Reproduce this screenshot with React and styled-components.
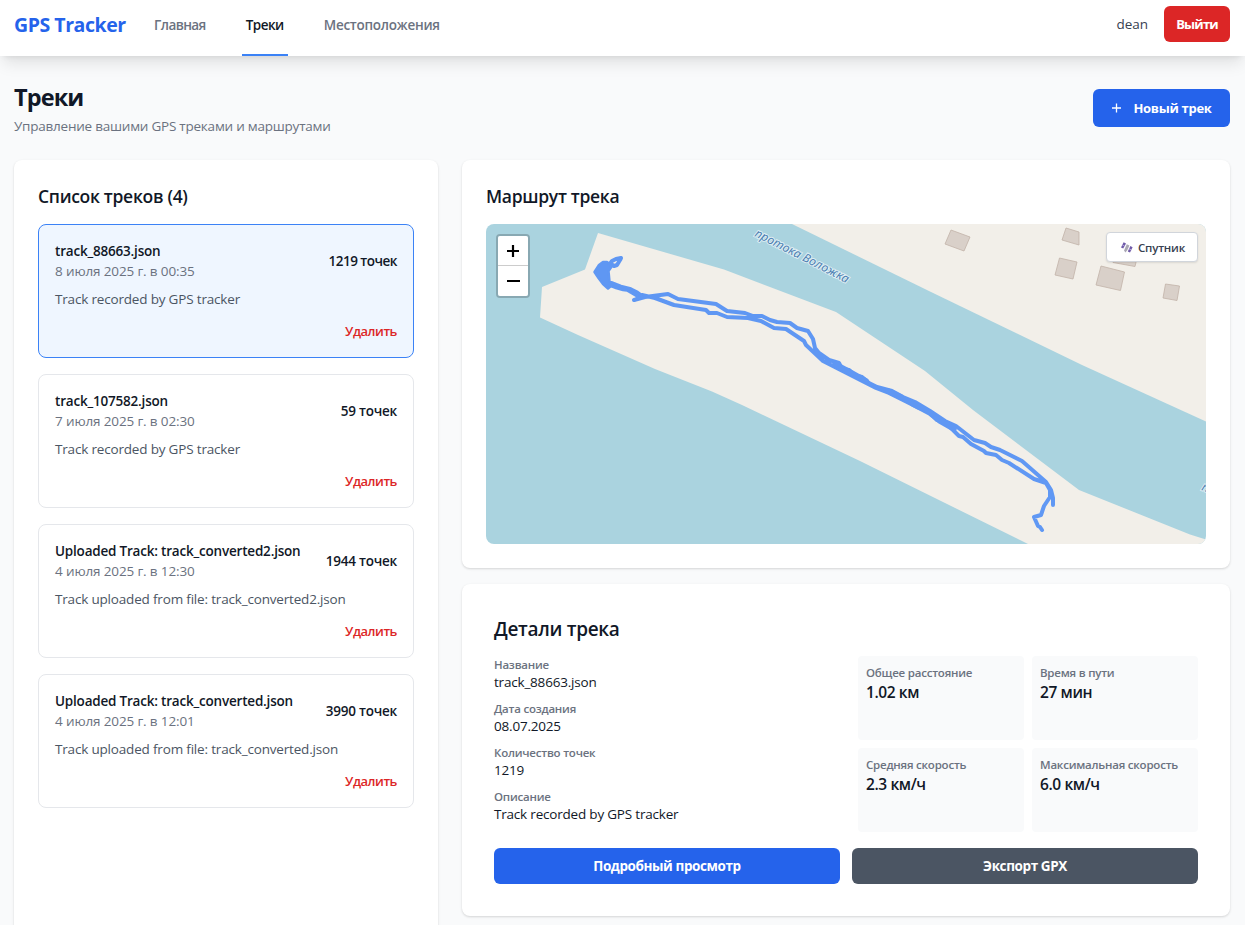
import React from "react";
import styled, { createGlobalStyle } from "styled-components";

const Global = createGlobalStyle`
  *, *::before, *::after { box-sizing: border-box; }
  html, body { margin: 0; height: 925px; overflow: hidden; }
  body {
    background: #f9fafb;
    color: #111827;
    font-family: "Open Sans", "Noto Sans", sans-serif;
    font-size: 13.5px;
    line-height: 20px;
  }
  h1, h2, h3, p, dl, dt, dd, ul { margin: 0; padding: 0; }
  button { font-family: inherit; border: 0; cursor: pointer; }
`;

const Page = styled.div`
  height: 925px;
  overflow: hidden;
`;

const TopBar = styled.header`
  display: flex;
  align-items: center;
  justify-content: space-between;
  height: 56px;
  padding: 0 15px 0 14px;
  background: #fff;
  box-shadow: 0 10px 15px -3px rgba(0, 0, 0, 0.1), 0 4px 6px -4px rgba(0, 0, 0, 0.1);
`;

const Brand = styled.div`
  width: 112px;
  margin-right: 24px;
  padding-bottom: 6px;
  color: #2563eb;
  font-size: 19.5px;
  font-weight: 700;
  line-height: 28px;
  letter-spacing: -0.45px;
  white-space: nowrap;
`;

const Nav = styled.nav`
  display: flex;
  align-items: center;
  height: 56px;
`;

const NavLink = styled.a`
  display: flex;
  align-items: center;
  height: 56px;
  margin-right: ${(p) => p.$gap || 0}px;
  padding: 0 4px 4px;
  border-bottom: 2px solid ${(p) => (p.$active ? "#3b82f6" : "transparent")};
  color: ${(p) => (p.$active ? "#111827" : "#6b7280")};
  font-weight: 600;
  letter-spacing: ${(p) => p.$track || 0}px;
  white-space: nowrap;
`;

const Account = styled.div`
  display: flex;
  align-items: center;
  gap: 16px;
  padding-bottom: 8px;
  color: #374151;
`;

const Button = styled.button`
  display: flex;
  align-items: center;
  justify-content: center;
  gap: 11px;
  height: ${(p) => p.$h || 36}px;
  width: ${(p) => (p.$w ? `${p.$w}px` : "auto")};
  flex: ${(p) => (p.$w ? "none" : "1")};
  padding: 0 0 1px;
  border-radius: 6px;
  background: ${(p) => p.$color};
  color: #fff;
  font-size: ${(p) => (p.$w ? 13 : 13.5)}px;
  font-weight: 700;
  letter-spacing: ${(p) => p.$track || -0.4}px;
  white-space: nowrap;
`;

const Heading = styled.div`
  display: flex;
  justify-content: space-between;
  align-items: center;
  height: 104px;
  padding: 0 15px 0 14px;
`;

const Title = styled.h1`
  font-size: 23.5px;
  line-height: 32px;
  font-weight: 700;
  letter-spacing: -0.9px;
`;

const Subtitle = styled.p`
  margin: 3px 0 -1px;
  color: #6b7280;
  letter-spacing: -0.23px;
`;

const Columns = styled.main`
  display: grid;
  grid-template-columns: 424px 768px;
  gap: 24px;
  padding-left: 14px;
`;

const Card = styled.section`
  border-radius: 8px;
  background: #fff;
  box-shadow: 0 1px 3px rgba(0, 0, 0, 0.1), 0 1px 2px rgba(0, 0, 0, 0.06);
  height: ${(p) => p.$h}px;
  padding: ${(p) => p.$pad || 24}px;
`;

const CardTitle = styled.h2`
  height: 40px;
  font-size: ${(p) => p.$size || 17.5}px;
  line-height: ${(p) => (p.$size ? 26 : 25)}px;
  font-weight: 600;
  letter-spacing: -0.3px;
`;

const TrackList = styled.div`
  display: flex;
  flex-direction: column;
  gap: 16px;
`;

const TrackItem = styled.article`
  display: flex;
  flex-direction: column;
  height: 134px;
  padding: 16px;
  border: 1px solid ${(p) => (p.$selected ? "#3b82f6" : "#e5e7eb")};
  border-radius: 8px;
  background: ${(p) => (p.$selected ? "#eff6ff" : "#fff")};
`;

const TrackHead = styled.div`
  display: flex;
  align-items: center;
  justify-content: space-between;
  height: 40px;
  white-space: nowrap;
`;

const TrackName = styled.h3`
  font-size: 13.5px;
  line-height: 20px;
  font-weight: 600;
  letter-spacing: -0.2px;
`;

const TrackDate = styled.p`
  color: #6b7280;
  letter-spacing: -0.14px;
`;

const Points = styled.span`
  font-weight: 600;
  letter-spacing: ${(p) => (p.$tight ? -0.5 : -0.22)}px;
`;

const TrackNote = styled.p`
  margin-top: 8px;
  color: #4b5563;
  letter-spacing: -0.18px;
  white-space: nowrap;
`;

const DeleteLink = styled.button`
  align-self: flex-end;
  margin-top: 12px;
  padding: 0;
  background: none;
  color: #dc2626;
  font-size: 13px;
  line-height: 20px;
  font-weight: 600;
  letter-spacing: -0.45px;
`;

const RightColumn = styled.div`
  display: flex;
  flex-direction: column;
  gap: 16px;
`;

const MapFrame = styled.div`
  position: relative;
  width: 720px;
  height: 320px;
  border-radius: 8px;
  overflow: hidden;
`;

const ZoomControl = styled.div`
  position: absolute;
  top: 10px;
  left: 10px;
  width: 34px;
  border: 2px solid rgba(0, 0, 0, 0.2);
  border-radius: 4px;
  background-clip: padding-box;
`;

const ZoomButton = styled.button`
  display: flex;
  align-items: center;
  justify-content: center;
  width: 30px;
  height: 30px;
  padding: 0;
  background: #fff;
  border-bottom: ${(p) => (p.$first ? "1px solid #ccc" : "0")};
  border-radius: ${(p) => (p.$first ? "2px 2px 0 0" : "0 0 2px 2px")};
`;

const LayerButton = styled.button`
  position: absolute;
  top: 8px;
  right: 8px;
  display: flex;
  align-items: center;
  width: 92px;
  height: 30px;
  padding: 0 0 0 13px;
  gap: 5px;
  border: 1px solid #d1d5db;
  border-radius: 4px;
  background: #fff;
  box-shadow: 0 1px 2px rgba(0, 0, 0, 0.1);
  color: #374151;
  font-size: 11.5px;
  font-weight: 600;
  letter-spacing: -0.2px;
`;

const DetailGrid = styled.div`
  display: grid;
  grid-template-columns: 356px 340px;
  gap: 8px;
  height: 176px;
`;

const Facts = styled.dl`
  display: flex;
  flex-direction: column;
  gap: 8px;
`;

const Label = styled.dt`
  padding-top: ${(p) => p.$drop || 0}px;
  margin-bottom: -${(p) => p.$drop || 0}px;
  color: #6b7280;
  font-size: 11.5px;
  line-height: 16px;
  font-weight: 600;
  letter-spacing: -0.22px;
  white-space: nowrap;
`;

const Value = styled.dd`
  line-height: ${(p) => (p.$big ? 23 : 20)}px;
  font-size: ${(p) => (p.$big ? 15.5 : 13.5)}px;
  font-weight: ${(p) => (p.$big ? 600 : 400)};
  letter-spacing: ${(p) => (p.$big ? -0.4 : -0.2)}px;
`;

const Stats = styled.div`
  display: grid;
  grid-template-columns: 166px 166px;
  grid-template-rows: 84px 84px;
  gap: 8px;
`;

const Stat = styled.dl`
  padding: 9px 8px;
  border-radius: 4px;
  background: #f9fafb;
`;

const Actions = styled.div`
  display: flex;
  gap: 12px;
  margin-top: 16px;
`;

const tracks = [
  { name: "track_88663.json", date: "8 июля 2025 г. в 00:35", points: 1219, note: "Track recorded by GPS tracker" },
  { name: "track_107582.json", date: "7 июля 2025 г. в 02:30", points: 59, note: "Track recorded by GPS tracker" },
  { name: "Uploaded Track: track_converted2.json", date: "4 июля 2025 г. в 12:30", points: 1944, note: "Track uploaded from file: track_converted2.json" },
  { name: "Uploaded Track: track_converted.json", date: "4 июля 2025 г. в 12:01", points: 3990, note: "Track uploaded from file: track_converted.json" },
];

const facts = [
  ["Название", "track_88663.json"],
  ["Дата создания", "08.07.2025"],
  ["Количество точек", "1219"],
  ["Описание", "Track recorded by GPS tracker"],
];

const stats = [
  ["Общее расстояние", "1.02 км"],
  ["Время в пути", "27 мин"],
  ["Средняя скорость", "2.3 км/ч"],
  ["Максимальная скорость", "6.0 км/ч"],
];

const buildings = [
  "951,230 970,237 964,251 945,244",
  "1066,228 1079,232 1079,245 1062,240",
  "1059.5,258 1077,262 1073,279 1055,275",
  "1101,266 1124.5,272 1120.5,290.5 1096,285",
  "1110,252 1137,258 1135,266.5 1113,262.5",
  "1165.5,284 1179.5,286 1177,300.5 1163,298",
];

const route =
  "M609 265L612 261L616 259L621 258L620 260L617 265L614 266L611 264M634 300L645 297L668 294L678 299L716 304L727 311L745 313L753 316L762 316L770 320L777 322L790 323L797 328L808 331L813 339L815 348L819 353L829 360L839 363L842 369L849 370L854 375L862 377L869 383L877 387L892 391L903 397L915 402L930 411L945 421L956 426L974 440L985 443L991 447L1000 450L1022 461L1046 482L1051 490L1053 498V505" +
  "M642 295L655 298L674 305L706 310L709 313L717 313L727 317L748 318L761 321L774 328L786 329L804 341L806 345L823 361L876 388L889 393L903 400L917 407L928 411L937 420L947 424L957 434L959 436L963 437L971 444L984 451L986 453L996 455L1002 460L1009 463L1034 479L1046 483L1050 490L1050 497L1044 506L1041 515L1034 517L1038 526L1040 527L1042 530";

// Points recorded while standing still merge into one solid blot.
const standstill =
  "M607 262L603 262L599 265L594.5 272L598.5 278L603 284L608 288.5L611 286L616 288L623 290L627 290.5L633 294L638 297L635 300L642 297L641 294.5L637 291.5L631 288.5L621 286L609.5 281.5L608.5 271L612 266Z";

const overlaps =
  "M835 364L850 372L866 381M888 391L901 397M913 404L930 413L940 421L954 429";

function MapDrawing() {
  return (
    <svg width="720" height="320" viewBox="486 224 720 320" display="block">
      <rect x="486" y="224" width="720" height="320" fill="#aad3df" />
      <g fill="#f2efe9">
        <path d="M598 233L724 269.5L836 312L925 371L973 410L1079 490L1190 534.5L1206 539.5V544H1028L860 461L742 405L712 391.5L655 369L578 335L540 317.5L542 287L585 269.5Z" />
        <path d="M792 224L930 291.5L1082 365L1206 421.5V224Z" />
      </g>
      <g fill="#d9d0c9" stroke="#c2b2a8" strokeWidth="0.8">
        {buildings.map((b) => <polygon key={b} points={b} />)}
      </g>
      <g fill="#4d80b3" stroke="#fff" strokeOpacity="0.6" strokeWidth="2" paintOrder="stroke" fontSize="12" fontStyle="italic" fontFamily='"Noto Sans", sans-serif'>
        <text transform="translate(754 236) rotate(27)" textLength="104">протока Воложка</text>
        <text transform="translate(1201 490) rotate(20)">п</text>
      </g>
      <g fill="none" stroke="#3b82f6" strokeWidth="4" strokeLinecap="round" strokeLinejoin="round" opacity="0.8">
        <path d={route} />
        <path d={standstill} fill="#3b82f6" strokeWidth="2.5" />
        <path d={overlaps} strokeWidth="5.5" />
      </g>
    </svg>
  );
}

function SatelliteIcon() {
  return (
    <svg width="13" height="13" viewBox="0 0 13 13">
      <path d="M1 6.5L3.6 1.2L6 2.4L3.2 7.4Z" fill="#6f5aa8" />
      <path d="M7.8 10.4L10.4 5L12.6 6.2L10 11.4Z" fill="#6f5aa8" />
      <path d="M4 9.6L6.8 3.2L9.4 4.6L7.4 9L5.4 11.4Z" fill="#aaa8b4" />
      <path d="M2.2 3.9L4.6 5.1M9 7.8L11.4 9" stroke="#cfc5ee" strokeWidth="0.7" />
    </svg>
  );
}

export default function App() {
  return (
    <>
      <Global />
      <Page>
        <TopBar>
          <Nav>
            <Brand>GPS Tracker</Brand>
            <NavLink $gap={32} $track={-0.57}>Главная</NavLink>
            <NavLink $active $gap={32} $track={-0.55}>Треки</NavLink>
            <NavLink $track={-0.25}>Местоположения</NavLink>
          </Nav>
          <Account>
            <span>dean</span>
            <Button $color="#dc2626" $w={66} $track={-0.8}>Выйти</Button>
          </Account>
        </TopBar>
        <Heading>
          <div>
            <Title>Треки</Title>
            <Subtitle>Управление вашими GPS треками и маршрутами</Subtitle>
          </div>
          <Button $color="#2563eb" $w={137} $h={38} $track={-0.3}>
            <svg width="11" height="12" viewBox="0 0 11 12"><path d="M5.5 1.5V10.5M1 6H10" stroke="#fff" strokeWidth="1.3" /></svg>
            Новый трек
          </Button>
        </Heading>
        <Columns>
          <Card $h={800}>
            <CardTitle>Список треков (4)</CardTitle>
            <TrackList>
              {tracks.map((t, i) => (
                <TrackItem key={t.name} $selected={i === 0}>
                  <TrackHead>
                    <div>
                      <TrackName>{t.name}</TrackName>
                      <TrackDate>{t.date}</TrackDate>
                    </div>
                    <Points $tight={i === 0}>{t.points} точек</Points>
                  </TrackHead>
                  <TrackNote>{t.note}</TrackNote>
                  <DeleteLink>Удалить</DeleteLink>
                </TrackItem>
              ))}
            </TrackList>
          </Card>
          <RightColumn>
            <Card $h={408}>
              <CardTitle>Маршрут трека</CardTitle>
              <MapFrame>
                <MapDrawing />
                <ZoomControl>
                  <ZoomButton $first aria-label="+">
                    <svg width="14" height="14"><path d="M7 1V13M1 7H13" stroke="#000" strokeWidth="2.2" /></svg>
                  </ZoomButton>
                  <ZoomButton aria-label="−">
                    <svg width="14" height="14"><path d="M1 7H14" stroke="#000" strokeWidth="2" /></svg>
                  </ZoomButton>
                </ZoomControl>
                <LayerButton><SatelliteIcon />Спутник</LayerButton>
              </MapFrame>
            </Card>
            <Card $h={332} $pad={32}>
              <CardTitle $size={19}>Детали трека</CardTitle>
              <DetailGrid>
                <Facts>
                  {facts.map(([k, v]) => <div key={k}><Label $drop={1}>{k}</Label><Value>{v}</Value></div>)}
                </Facts>
                <Stats>
                  {stats.map(([k, v]) => <Stat key={k}><Label>{k}</Label><Value $big>{v}</Value></Stat>)}
                </Stats>
              </DetailGrid>
              <Actions>
                <Button $color="#2563eb">Подробный просмотр</Button>
                <Button $color="#4b5563">Экспорт GPX</Button>
              </Actions>
            </Card>
          </RightColumn>
        </Columns>
      </Page>
    </>
  );
}
